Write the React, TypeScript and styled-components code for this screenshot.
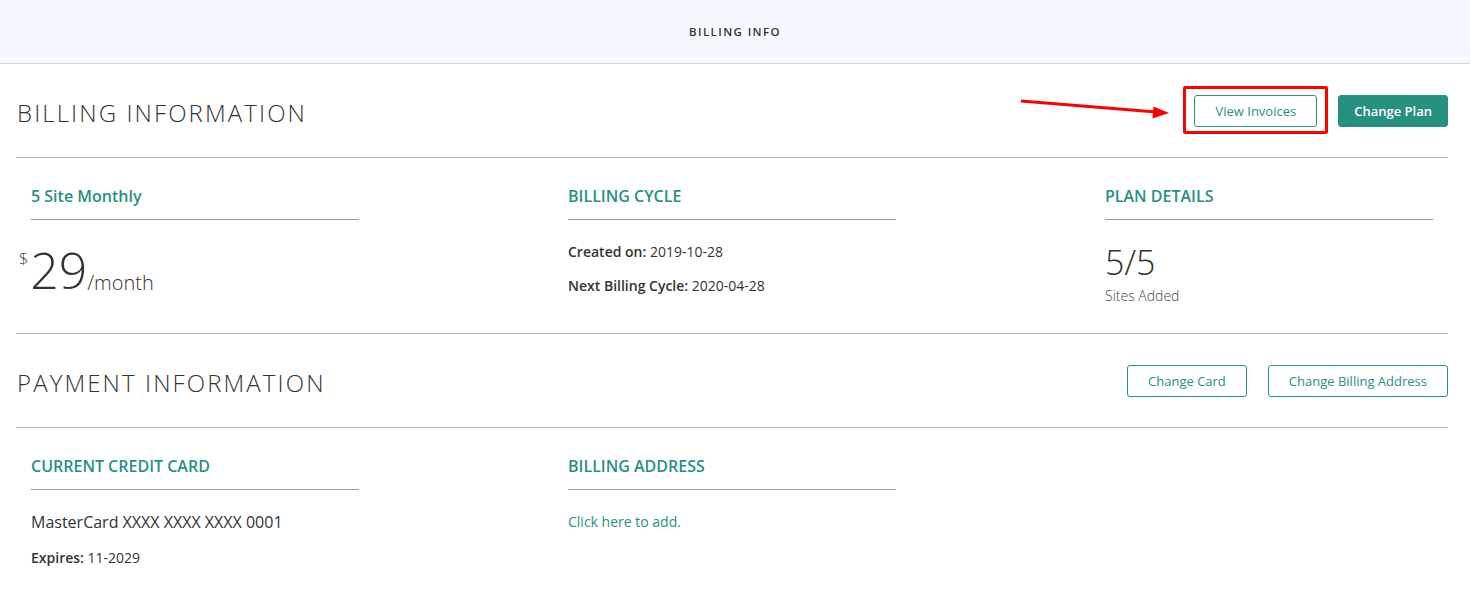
import React from 'react';
import styled, { createGlobalStyle } from 'styled-components';

const teal = '#27917f';

const GlobalStyle = createGlobalStyle`
  html, body {
    margin: 0;
    padding: 0;
    background: #fff;
  }
  body {
    font-family: 'Open Sans', 'Liberation Sans', sans-serif;
    color: #333;
  }
`;

const App = () => {
  return (
    <>
      <GlobalStyle />
      <TopBar>
        <TopTitle>BILLING INFO</TopTitle>
      </TopBar>
      <Page>
        <SectionHead>
          <Heading>BILLING INFORMATION</Heading>
          <Actions>
            <Highlight>
              <Arrow width="160" height="30" viewBox="0 0 160 30">
                <line x1="2" y1="3" x2="137" y2="14" stroke="#f00" strokeWidth="3" />
                <polygon points="150,15 134.5,8.5 133.5,20.5" fill="#f00" />
              </Arrow>
              <OutlineButton>View Invoices</OutlineButton>
            </Highlight>
            <FilledButton>Change Plan</FilledButton>
          </Actions>
        </SectionHead>

        <Columns>
          <Column>
            <ColTitle>5 Site Monthly</ColTitle>
            <Price>
              <Currency>$</Currency>
              <Amount>29</Amount>
              <Per>/month</Per>
            </Price>
          </Column>
          <Column>
            <ColTitle>BILLING CYCLE</ColTitle>
            <Line>
              <b>Created on:</b> 2019-10-28
            </Line>
            <Line>
              <b>Next Billing Cycle:</b> 2020-04-28
            </Line>
          </Column>
          <Column>
            <ColTitle>PLAN DETAILS</ColTitle>
            <Count>5/5</Count>
            <CountLabel>Sites Added</CountLabel>
          </Column>
        </Columns>

        <SectionHead>
          <Heading>PAYMENT INFORMATION</Heading>
          <Actions>
            <OutlineButton>Change Card</OutlineButton>
            <OutlineButton>Change Billing Address</OutlineButton>
          </Actions>
        </SectionHead>

        <Columns $last>
          <Column>
            <ColTitle>CURRENT CREDIT CARD</ColTitle>
            <CardNumber>MasterCard XXXX XXXX XXXX 0001</CardNumber>
            <Line>
              <b>Expires:</b> 11-2029
            </Line>
          </Column>
          <Column>
            <ColTitle>BILLING ADDRESS</ColTitle>
            <AddLink href="#">Click here to add.</AddLink>
          </Column>
          <Column />
        </Columns>
      </Page>
    </>
  );
};

export default App;

const TopBar = styled.header`
  height: 63px;
  background: #f5f8fe;
  border-bottom: 1px solid #d3d7de;
  display: flex;
  align-items: center;
  justify-content: center;
`;

const TopTitle = styled.h1`
  margin: 0;
  font-size: 11.5px;
  font-weight: 600;
  letter-spacing: 1.4px;
  color: #333;
`;

const Page = styled.main`
  padding: 0 22px 0 16px;
  overflow: hidden;
`;

const SectionHead = styled.div`
  height: 93px;
  display: flex;
  align-items: center;
  justify-content: space-between;
  border-bottom: 1px solid #b5b5b5;
`;

const Heading = styled.h2`
  margin: 0 0 0 1px;
  padding-top: 4px;
  font-size: 24px;
  font-weight: 300;
  letter-spacing: 2.1px;
  color: #333;
`;

const Actions = styled.div`
  display: flex;
  align-items: center;
  gap: 21px;
`;

const Highlight = styled.div`
  position: relative;
  display: flex;

  &::after {
    content: '';
    position: absolute;
    left: -11px;
    right: -11px;
    top: -9px;
    bottom: -7px;
    border: 3px solid #f00;
    border-radius: 2px;
    pointer-events: none;
  }
`;

const Arrow = styled.svg`
  position: absolute;
  left: -175px;
  top: 3px;
`;

const OutlineButton = styled.button`
  height: 32px;
  padding: 0 20px;
  background: #fff;
  border: 1px solid ${teal};
  border-radius: 3px;
  color: ${teal};
  font-family: 'Open Sans', 'Liberation Sans', sans-serif;
  font-size: 13px;
  cursor: pointer;
`;

const FilledButton = styled(OutlineButton)`
  background: ${teal};
  color: #fff;
  font-weight: 600;
  padding: 0 15px;
`;

const Columns = styled.div<{ $last?: boolean }>`
  display: grid;
  grid-template-columns: repeat(3, 537px);
  padding: 27px 0 0 15px;
  height: ${(p) => (p.$last ? 'auto' : '148px')};
  border-bottom: ${(p) => (p.$last ? 'none' : '1px solid #b5b5b5')};
`;

const Column = styled.div`
  display: flex;
  flex-direction: column;
`;

const ColTitle = styled.h3`
  width: 328px;
  margin: 0 0 22px;
  padding-bottom: 12px;
  border-bottom: 1px solid #999;
  color: ${teal};
  font-size: 16px;
  font-weight: 600;
  line-height: 22px;
`;

const Price = styled.div`
  display: flex;
  align-items: flex-start;
  color: #333;
  margin-top: -2px;
`;

const Currency = styled.span`
  margin-left: -12px;
  margin-right: 2px;
  font-size: 16px;
  font-weight: 300;
  line-height: 20px;
  padding-top: 9px;
`;

const Amount = styled.span`
  font-size: 50px;
  font-weight: 300;
  line-height: 60px;
`;

const Per = styled.span`
  font-size: 20px;
  font-weight: 300;
  padding-top: 29px;
`;

const Line = styled.p`
  margin: 0 0 15px;
  font-size: 14px;
  line-height: 19px;
  color: #333;

  b {
    font-weight: 600;
  }
`;

const Count = styled.div`
  font-size: 34px;
  font-weight: 300;
  line-height: 40px;
  color: #333;
`;

const CountLabel = styled.div`
  font-size: 14px;
  font-weight: 300;
  color: #444;
  line-height: 18px;
  margin-top: 5px;
`;

const CardNumber = styled.div`
  font-size: 16px;
  line-height: 22px;
  margin: -1px 0 15px;
  color: #333;
`;

const AddLink = styled.a`
  font-size: 14px;
  line-height: 19px;
  color: ${teal};
  text-decoration: none;
`;
